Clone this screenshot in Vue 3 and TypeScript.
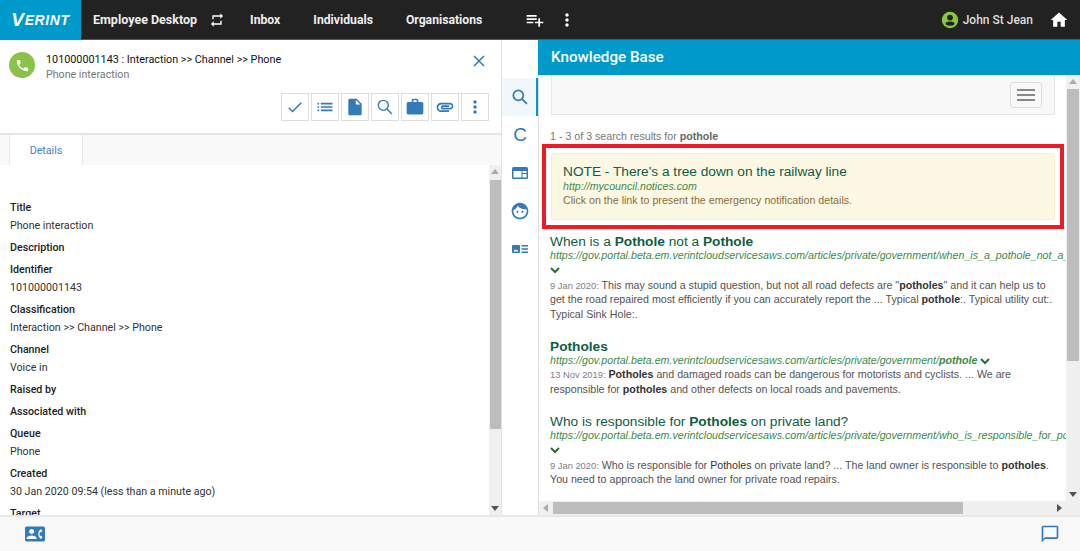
<script setup lang="ts">
interface Field {
  label: string;
  value?: string;
}

interface Tool {
  d: string;
  line?: boolean;
}

const paths = {
  list: "M3 13h2v-2H3v2zm0 4h2v-2H3v2zm0-8h2V7H3v2zm4 4h14v-2H7v2zm0 4h14v-2H7v2zM7 7v2h14V7H7z",
  doc: "M14 2H6c-1.1 0-2 .9-2 2v16c0 1.1.9 2 2 2h12c1.1 0 2-.9 2-2V8l-6-6zm-1 7V3.5L18.5 9H13z",
  work: "M20 6h-4V4c0-1.11-.89-2-2-2h-4c-1.11 0-2 .89-2 2v2H4c-1.11 0-2 .89-2 2v11c0 1.11.89 2 2 2h16c1.11 0 2-.89 2-2V8c0-1.11-.89-2-2-2zm-6 0h-4V4h4v2z",
  clip: "M2 12.5C2 9.46 4.46 7 7.5 7H18c2.21 0 4 1.79 4 4s-1.79 4-4 4H9.5C8.12 15 7 13.88 7 12.5S8.12 10 9.5 10H17v2H9.41c-.55 0-.55 1 0 1H18c1.1 0 2-.9 2-2s-.9-2-2-2H7.5C5.57 9 4 10.57 4 12.5S5.57 16 7.5 16H17v2H7.5C4.46 18 2 15.54 2 12.5z",
  more: "M12 8c1.1 0 2-.9 2-2s-.9-2-2-2-2 .9-2 2 .9 2 2 2zm0 2c-1.1 0-2 .9-2 2s.9 2 2 2 2-.9 2-2-.9-2-2-2zm0 6c-1.1 0-2 .9-2 2s.9 2 2 2 2-.9 2-2-.9-2-2-2z",
  check: "M4.5 13l4.5 4.5L19.5 7",
  search: "M10 4a6 6 0 1 1 0 12a6 6 0 1 1 0-12zM14.3 14.3l6 6",
};

const toolbar: Tool[] = [
  { d: paths.check, line: true },
  { d: paths.list },
  { d: paths.doc },
  { d: paths.search, line: true },
  { d: paths.work },
  { d: paths.clip },
  { d: paths.more },
];

const fields: Field[] = [
  { label: "Title", value: "Phone interaction" },
  { label: "Description" },
  { label: "Identifier", value: "101000001143" },
  { label: "Classification", value: "Interaction >> Channel >> Phone" },
  { label: "Channel", value: "Voice in" },
  { label: "Raised by" },
  { label: "Associated with" },
  { label: "Queue", value: "Phone" },
  { label: "Created", value: "30 Jan 2020 09:54 (less than a minute ago)" },
  { label: "Target" },
];
</script>

<template>
  <div class="app">
    <header class="topbar">
      <div class="logo"><span class="logo-v">V</span>ERINT</div>
      <span class="nav-item brand">Employee Desktop</span>
      <svg class="swap" width="16" height="16" viewBox="0 0 24 24"><path fill="#fff" d="M7 7h10v3l4-4-4-4v3H5v6h2V7zm10 10H7v-3l-4 4 4 4v-3h12v-6h-2v4z" /></svg>
      <nav class="nav">
        <span class="nav-item">Inbox</span>
        <span class="nav-item">Individuals</span>
        <span class="nav-item">Organisations</span>
      </nav>
      <svg class="add" width="20" height="20" viewBox="0 0 24 24"><path fill="#fff" d="M14 10H2v2h12v-2zm0-4H2v2h12V6zm4 8v-4h-2v4h-4v2h4v4h2v-4h4v-2h-4zM2 16h8v-2H2v2z" /></svg>
      <svg class="dots" width="20" height="20" viewBox="0 0 24 24"><path fill="#fff" :d="paths.more" /></svg>
      <div class="user">
        <svg width="18" height="18" viewBox="0 0 18 18">
          <circle cx="9" cy="9" r="8.2" fill="#8cc63f" />
          <circle cx="9" cy="6.6" r="2.9" fill="#222" />
          <ellipse cx="9" cy="12.6" rx="4.4" ry="2.2" fill="#222" />
        </svg>
        <span>John St Jean</span>
      </div>
      <svg class="home" width="20" height="20" viewBox="0 0 24 24"><path fill="#fff" d="M10 20v-6h4v6h5v-8h3L12 3 2 12h3v8z" /></svg>
    </header>

    <main class="main">
      <section class="left">
        <div class="case">
          <div class="case-top">
            <span class="avatar">
              <svg width="15" height="15" viewBox="0 0 24 24"><path fill="#fff" d="M6.62 10.79c1.44 2.83 3.76 5.14 6.59 6.59l2.2-2.2c.27-.27.67-.36 1.02-.24 1.12.37 2.33.57 3.57.57.55 0 1 .45 1 1V20c0 .55-.45 1-1 1-9.39 0-17-7.61-17-17 0-.55.45-1 1-1h3.5c.55 0 1 .45 1 1 0 1.25.2 2.45.57 3.57.11.35.03.74-.25 1.02l-2.2 2.2z" /></svg>
            </span>
            <div class="case-text">
              <div class="case-title">101000001143 : Interaction &gt;&gt; Channel &gt;&gt; Phone</div>
              <div class="case-sub">Phone interaction</div>
            </div>
            <svg class="close" width="14" height="14" viewBox="0 0 14 14"><path d="M2 2l10 10M12 2L2 12" stroke="#337ab7" stroke-width="1.5" fill="none" /></svg>
          </div>
          <div class="tools">
            <button v-for="(t, i) in toolbar" :key="i" type="button" class="tool">
              <svg width="20" height="20" viewBox="0 0 24 24">
                <path v-if="t.line" fill="none" stroke="#337ab7" stroke-width="1.7" :d="t.d" />
                <path v-else fill="#337ab7" :d="t.d" />
              </svg>
            </button>
          </div>
        </div>
        <div class="tabs"><span class="tab">Details</span></div>
        <div class="detail">
          <div class="fields">
            <div v-for="f in fields" :key="f.label" class="field">
              <div class="label">{{ f.label }}</div>
              <div v-if="f.value" class="value">{{ f.value }}</div>
            </div>
          </div>
          <div class="vbar vbar-left">
            <i class="arrow up"></i>
            <b class="thumb"></b>
            <i class="arrow down"></i>
          </div>
        </div>
      </section>

      <aside class="rail">
        <div class="rail-item active">
          <svg width="20" height="20" viewBox="0 0 24 24"><path fill="none" stroke="#337ab7" stroke-width="2.1" :d="paths.search" /></svg>
        </div>
        <div class="rail-item rail-c">C</div>
        <div class="rail-item">
          <svg width="18" height="18" viewBox="0 0 18 18">
            <rect x="1" y="3" width="16" height="12" rx="1.5" fill="#337ab7" />
            <rect x="2.5" y="7" width="8" height="6.5" fill="#fff" />
            <rect x="11.5" y="7" width="4" height="2" fill="#fff" />
            <rect x="11.5" y="10" width="4" height="3.5" fill="#fff" />
          </svg>
        </div>
        <div class="rail-item">
          <svg width="20" height="20" viewBox="0 0 24 24">
            <path fill="#337ab7" d="M9 11.75c-.69 0-1.25.56-1.25 1.25s.56 1.25 1.25 1.25 1.25-.56 1.25-1.25-.56-1.25-1.25-1.25zm6 0c-.69 0-1.25.56-1.25 1.25s.56 1.25 1.25 1.25 1.25-.56 1.25-1.25-.56-1.25-1.25-1.25zM12 2C6.48 2 2 6.48 2 12s4.48 10 10 10 10-4.48 10-10S17.52 2 12 2zm0 18c-4.41 0-8-3.59-8-8 0-.29.02-.58.05-.86 2.36-1.05 4.23-2.98 5.21-5.37C11.07 8.33 14.05 10 17.42 10c.78 0 1.53-.09 2.25-.26.21.71.33 1.47.33 2.26 0 4.41-3.59 8-8 8z" />
          </svg>
        </div>
        <div class="rail-item">
          <svg width="18" height="18" viewBox="0 0 18 18">
            <rect x="1" y="5" width="8" height="8" rx="1" fill="#337ab7" />
            <path d="M2.5 11.5l1.6-2.2 1.2 1.3.9-.8 1.3 1.7z" fill="#fff" />
            <path d="M10.5 5.8H17M10.5 9H17M10.5 12.2H17" stroke="#337ab7" stroke-width="1.4" />
          </svg>
        </div>
      </aside>

      <section class="right">
        <h2 class="kb-head">Knowledge Base</h2>
        <div class="kb-body">
          <div class="kb-scroll">
            <div class="searchbox">
              <button type="button" class="burger"><i></i><i></i><i></i></button>
            </div>
            <p class="count">1 - 3 of 3 search results for <b>pothole</b></p>
            <div class="callout">
              <div class="notice">
                <div class="r-title">NOTE - There's a tree down on the railway line</div>
                <div class="r-url">http://mycouncil.notices.com</div>
                <div class="notice-text">Click on the link to present the emergency notification details.</div>
              </div>
            </div>

            <article class="result first">
              <div class="r-title">When is a <b>Pothole</b> not a <b>Pothole</b></div>
              <div class="r-url nowrap">https://gov.portal.beta.em.verintcloudservicesaws.com/articles/private/government/when_is_a_pothole_not_a_pothole</div>
              <svg class="chev" width="10" height="7" viewBox="0 0 10 7"><path d="M1 1l4 4 4-4" stroke="#2e6b3a" stroke-width="2" fill="none" /></svg>
              <p class="r-text"><span class="date">9 Jan 2020:</span> This may sound a stupid question, but not all road defects are "<b>potholes</b>" and it can help us to get the road repaired most efficiently if you can accurately report the ... Typical <b>pothole</b>:. Typical utility cut:. Typical Sink Hole:.</p>
            </article>

            <article class="result">
              <div class="r-title"><b>Potholes</b></div>
              <div class="r-url nowrap">https://gov.portal.beta.em.verintcloudservicesaws.com/articles/private/government/<b>pothole</b>
                <svg class="chev-inline" width="10" height="7" viewBox="0 0 10 7"><path d="M1 1l4 4 4-4" stroke="#2e6b3a" stroke-width="2" fill="none" /></svg>
              </div>
              <p class="r-text"><span class="date">13 Nov 2019:</span> <b>Potholes</b> and damaged roads can be dangerous for motorists and cyclists. ... We are responsible for <b>potholes</b> and other defects on local roads and pavements.</p>
            </article>

            <article class="result">
              <div class="r-title">Who is responsible for <b>Potholes</b> on private land?</div>
              <div class="r-url nowrap">https://gov.portal.beta.em.verintcloudservicesaws.com/articles/private/government/who_is_responsible_for_potholes_on_private_land</div>
              <svg class="chev" width="10" height="7" viewBox="0 0 10 7"><path d="M1 1l4 4 4-4" stroke="#2e6b3a" stroke-width="2" fill="none" /></svg>
              <p class="r-text"><span class="date">9 Jan 2020:</span> Who is responsible for <span class="mid">Potholes</span> on private land? ... The land owner is responsible to <b>potholes</b>. You need to approach the land owner for private road repairs.</p>
            </article>
          </div>
          <div class="vbar vbar-right">
            <i class="arrow up"></i>
            <b class="thumb"></b>
            <i class="arrow down"></i>
          </div>
          <div class="hbar">
            <i class="arrow left"></i>
            <b class="hthumb"></b>
            <i class="arrow right"></i>
          </div>
        </div>
      </section>
    </main>

    <footer class="footer">
      <svg width="20" height="20" viewBox="0 0 24 24"><path fill="#337ab7" d="M22 3H2C.9 3 0 3.9 0 5v14c0 1.1.9 2 2 2h20c1.1 0 1.99-.9 1.99-2L24 5c0-1.1-.9-2-2-2zM8 6c1.66 0 3 1.34 3 3s-1.34 3-3 3-3-1.34-3-3 1.34-3 3-3zm6 12H2v-1c0-2 4-3.1 6-3.1s6 1.1 6 3.1v1zm3.85-4h1.64L21 16l-1.99 1.99c-1.31-.98-2.28-2.38-2.73-3.99-.18-.64-.28-1.31-.28-2s.1-1.36.28-2c.45-1.62 1.42-3.01 2.73-3.99L21 8l-1.51 2h-1.64c-.22.63-.35 1.3-.35 2s.13 1.37.35 2z" /></svg>
      <svg width="20" height="20" viewBox="0 0 24 24"><path fill="#337ab7" d="M20 2H4c-1.1 0-2 .9-2 2v18l4-4h14c1.1 0 2-.9 2-2V4c0-1.1-.9-2-2-2zm0 14H6l-2 2V4h16v12z" /></svg>
    </footer>
  </div>
</template>

<style>
html,
body {
  margin: 0;
  overflow: hidden;
}
</style>

<style scoped>
.app {
  width: 1080px;
  height: 551px;
  display: flex;
  flex-direction: column;
  font-family: Roboto, "Liberation Sans", sans-serif;
  font-size: 10.67px;
  color: #222;
  background: #fff;
  overflow: hidden;
}

.topbar {
  height: 40px;
  flex: none;
  box-sizing: border-box;
  display: flex;
  align-items: center;
  background: #222;
  border-bottom: 1px solid #555;
}

.logo {
  width: 81px;
  height: 40px;
  flex: none;
  display: flex;
  align-items: center;
  justify-content: center;
  background: #0099cc;
  color: #fff;
  font: italic bold 14px "Liberation Sans", sans-serif;
  letter-spacing: 0.6px;
}

.logo-v {
  font-size: 19px;
}

.nav-item {
  color: #eee;
  font-weight: 700;
  font-size: 12.2px;
}

.brand {
  margin-left: 12px;
  font-size: 12.5px;
}

.swap {
  margin-left: 12px;
}

.nav {
  display: flex;
  gap: 33px;
  margin-left: 25px;
}

.add {
  margin-left: 43px;
}

.dots {
  margin-left: 12px;
}

.user {
  display: flex;
  align-items: center;
  gap: 4px;
  margin-left: auto;
  color: #ddd;
  font-weight: 500;
  font-size: 12px;
}

.home {
  margin: 0 11px 0 16px;
}

.main {
  flex: 1;
  min-height: 0;
  display: flex;
}

.left {
  width: 502px;
  flex: none;
  box-sizing: border-box;
  display: flex;
  flex-direction: column;
  border-right: 1px solid #e3e3e3;
}

.case {
  height: 95px;
  flex: none;
  box-sizing: border-box;
  padding: 12px 12px 0 9px;
  border-bottom: 2px solid #e5e5e5;
}

.case-top {
  display: flex;
  align-items: flex-start;
}

.avatar {
  width: 26px;
  height: 26px;
  flex: none;
  display: flex;
  align-items: center;
  justify-content: center;
  border-radius: 50%;
  background: #8bc34a;
}

.case-text {
  flex: 1;
  margin: 0 0 0 11px;
  line-height: 15px;
}

.case-title {
  color: #111;
  font-size: 10.8px;
}

.case-sub {
  color: #777;
}

.close {
  margin: 2px 3px 0 0;
}

.tools {
  display: flex;
  justify-content: flex-end;
  gap: 2px;
  margin-top: 11px;
}

.tool {
  width: 28px;
  height: 28px;
  box-sizing: border-box;
  padding: 0;
  display: flex;
  align-items: center;
  justify-content: center;
  background: #fff;
  border: 1px solid #ddd;
}

.tabs {
  height: 30px;
  flex: none;
  padding-left: 9px;
  background: #f9f9f9;
}

.tab {
  display: block;
  width: 74px;
  height: 30px;
  box-sizing: border-box;
  line-height: 31px;
  text-align: center;
  color: #4a7fc1;
  background: #fff;
  border: 1px solid #e8e8e8;
  border-width: 0 1px;
}

.detail {
  flex: 1;
  min-height: 0;
  display: flex;
  overflow: hidden;
}

.fields {
  flex: 1;
  padding: 36px 10px 0;
}

.field {
  margin-bottom: 8px;
  line-height: 14px;
}

.label {
  font-weight: 500;
  color: #222;
}

.value {
  margin-top: 4px;
  color: #333;
}

.vbar {
  width: 12px;
  flex: none;
  position: relative;
  background: #f0f0f0;
}

.thumb {
  display: block;
  position: absolute;
  left: 1px;
  right: 0;
  background: #bdbdbd;
}

.vbar-left .thumb {
  top: 15px;
  height: 249px;
}

.arrow {
  position: absolute;
  width: 0;
  height: 0;
  border: 4px solid transparent;
}

.arrow.up {
  top: 4px;
  left: 2px;
  border-top-width: 0;
  border-bottom: 5px solid #aaa;
}

.arrow.down {
  bottom: 4px;
  left: 2px;
  border-bottom-width: 0;
  border-top: 5px solid #555;
}

.rail {
  width: 36px;
  flex: none;
  padding-top: 38px;
  box-sizing: border-box;
  display: flex;
  flex-direction: column;
}

.rail-item {
  height: 38px;
  flex: none;
  box-sizing: border-box;
  display: flex;
  align-items: center;
  justify-content: center;
}

.rail-item.active {
  background: #f1f8fb;
  border-right: 2px solid #0099cc;
  padding-left: 2px;
}

.rail-c {
  color: #337ab7;
  font: 19px "Liberation Sans", sans-serif;
}

.right {
  flex: 1;
  min-width: 0;
  display: flex;
  flex-direction: column;
}

.kb-head {
  height: 35px;
  flex: none;
  margin: 0;
  padding-left: 13px;
  line-height: 35px;
  font-size: 15.2px;
  font-weight: 500;
  color: #fff;
  background: #0099cc;
}

.kb-body {
  flex: 1;
  min-height: 0;
  position: relative;
  border-left: 1px solid #ddd;
}

.kb-scroll {
  position: absolute;
  inset: 0 14px 14px 0;
  overflow: hidden;
  box-sizing: border-box;
  padding: 0 11px;
  font-family: "Liberation Sans", sans-serif;
}

.searchbox {
  height: 40px;
  margin-left: 1px;
  box-sizing: border-box;
  display: flex;
  align-items: center;
  justify-content: flex-end;
  padding-right: 12px;
  background: #f8f8f8;
  border: 1px solid #e7e7e7;
  border-top: 0;
}

.burger {
  width: 32px;
  height: 26px;
  box-sizing: border-box;
  padding: 0;
  display: flex;
  flex-direction: column;
  align-items: center;
  justify-content: center;
  gap: 3px;
  background: transparent;
  border: 1px solid #ddd;
  border-radius: 3px;
}

.burger i {
  width: 18px;
  height: 2px;
  background: #888;
}

.count {
  margin: 14px 0 1px;
  line-height: 14px;
  color: #777;
}

.count b {
  color: #666;
}

.callout {
  margin: 0 -9px 0 -8px;
  padding: 5px 5px;
  border: 4px solid #ed1c24;
}

.notice {
  height: 67px;
  box-sizing: border-box;
  padding: 10px 11px 0;
  background: #fcf8e3;
  border: 1px solid #faebcc;
  border-radius: 3px;
}

.notice-text {
  line-height: 14px;
  color: #8a6d3b;
}

.r-title {
  font-size: 13.7px;
  line-height: 15px;
  color: #0e5c45;
}

.r-url {
  font-style: italic;
  line-height: 13px;
  color: #3c8a4a;
}

.notice .r-url {
  line-height: 14px;
}

.nowrap {
  white-space: nowrap;
}

.result {
  margin-bottom: 18px;
}

.result.first {
  margin-top: 5px;
}

.chev {
  display: block;
  margin: 5px 0 4px;
}

.chev-inline {
  margin-left: 3px;
  vertical-align: -1px;
}

.r-text {
  margin: 0;
  line-height: 14.4px;
  color: #545454;
}

.r-text b {
  color: #333;
}

.mid {
  color: #333;
}

.date {
  font-size: 9.33px;
  line-height: 1;
  color: #808080;
}

.vbar-right {
  position: absolute;
  top: 0;
  right: 0;
  bottom: 0;
  width: 14px;
}

.vbar-right .thumb {
  top: 14px;
  height: 272px;
  left: 1px;
  right: 1px;
}

.vbar-right .arrow {
  left: 3px;
}

.vbar-right .arrow.down {
  bottom: 18px;
}

.hbar {
  position: absolute;
  left: 0;
  right: 14px;
  bottom: 0;
  height: 14px;
  background: #f0f0f0;
}

.hthumb {
  position: absolute;
  top: 1px;
  bottom: 1px;
  left: 14px;
  width: 410px;
  background: #bdbdbd;
}

.arrow.left {
  left: 4px;
  top: 3px;
  border-left-width: 0;
  border-right: 5px solid #aaa;
}

.arrow.right {
  right: 4px;
  top: 3px;
  border-right-width: 0;
  border-left: 5px solid #555;
}

.footer {
  height: 36px;
  flex: none;
  box-sizing: border-box;
  display: flex;
  align-items: center;
  justify-content: space-between;
  padding: 0 20px 0 25px;
  background: #f9f9f9;
  border-top: 2px solid #e8e8e8;
}
</style>
